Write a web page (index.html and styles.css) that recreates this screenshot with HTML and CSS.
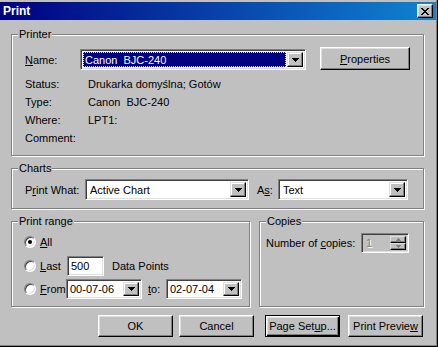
FILE: index.html
```html
<!DOCTYPE html>
<html lang="pl">
<head>
  <meta charset="UTF-8">
  <title>Print</title>
  <link rel="stylesheet" href="styles.css">
</head>
<body>
  <div class="window">
    <div class="titlebar">
      <span class="title">Print</span>
      <span class="close">
        <svg width="8" height="7" viewBox="0 0 8 7" shape-rendering="crispEdges"><path d="M0 0h2v1H0zM6 0h2v1H6zM1 1h2v1H1zM5 1h2v1H5zM2 2h4v1H2zM3 3h2v1H3zM2 4h4v1H2zM1 5h2v1H1zM5 5h2v1H5zM0 6h2v1H0zM6 6h2v1H6z"/></svg>
      </span>
    </div>

    <div class="content">
      <div class="group printer">
        <span class="group-title">Printer</span>
        <div class="name-row">
          <span class="name-label"><u>N</u>ame:</span>
          <div class="combo name-combo">
            <div class="combo-value selected"><span class="focus">Canon&nbsp; BJC-240</span></div>
            <span class="drop"><svg width="7" height="4" viewBox="0 0 7 4" shape-rendering="crispEdges"><path d="M0 0h7v1H0zM1 1h5v1H1zM2 2h3v1H2zM3 3h1v1H3z"/></svg></span>
          </div>
          <span class="btn props"><u>P</u>roperties</span>
        </div>
        <div class="info">
          <span>Status:</span><span>Drukarka domyślna; Gotów</span>
          <span>Type:</span><span>Canon&nbsp; BJC-240</span>
          <span>Where:</span><span>LPT1:</span>
          <span>Comment:</span><span></span>
        </div>
      </div>

      <div class="group charts">
        <span class="group-title">Charts</span>
        <div class="charts-row">
          <span class="what-label">P<u>r</u>int What:</span>
          <div class="combo what-combo">
            <div class="combo-value">Active Chart</div>
            <span class="drop"><svg width="7" height="4" viewBox="0 0 7 4" shape-rendering="crispEdges"><path d="M0 0h7v1H0zM1 1h5v1H1zM2 2h3v1H2zM3 3h1v1H3z"/></svg></span>
          </div>
          <span class="as-label">A<u>s</u>:</span>
          <div class="combo as-combo">
            <div class="combo-value">Text</div>
            <span class="drop"><svg width="7" height="4" viewBox="0 0 7 4" shape-rendering="crispEdges"><path d="M0 0h7v1H0zM1 1h5v1H1zM2 2h3v1H2zM3 3h1v1H3z"/></svg></span>
          </div>
        </div>
      </div>

      <div class="lower">
        <div class="group range">
          <span class="group-title">Print range</span>
          <div class="range-row all-row">
            <span class="radio checked"></span><span class="radio-label"><u>A</u>ll</span>
          </div>
          <div class="range-row last-row">
            <span class="radio"></span><span class="radio-label"><u>L</u>ast</span>
            <span class="edit last-edit">500</span>
            <span class="points">Data Points</span>
          </div>
          <div class="range-row from-row">
            <span class="radio"></span><span class="radio-label"><u>F</u>rom</span>
            <div class="combo date-combo">
              <div class="combo-value">00-07-06</div>
              <span class="drop"><svg width="7" height="4" viewBox="0 0 7 4" shape-rendering="crispEdges"><path d="M0 0h7v1H0zM1 1h5v1H1zM2 2h3v1H2zM3 3h1v1H3z"/></svg></span>
            </div>
            <span class="to-label"><u>t</u>o:</span>
            <div class="combo date-combo">
              <div class="combo-value">02-07-04</div>
              <span class="drop"><svg width="7" height="4" viewBox="0 0 7 4" shape-rendering="crispEdges"><path d="M0 0h7v1H0zM1 1h5v1H1zM2 2h3v1H2zM3 3h1v1H3z"/></svg></span>
            </div>
          </div>
        </div>

        <div class="group copies">
          <span class="group-title">Copies</span>
          <div class="copies-row">
            <span class="copies-label">Number of <u>c</u>opies:</span>
            <div class="spin">
              <span class="spin-value">1</span>
              <div class="spin-btns">
                <span class="spin-btn"><svg width="5" height="3" viewBox="0 0 5 3" shape-rendering="crispEdges"><path d="M2 0h1v1H2zM1 1h3v1H1zM0 2h5v1H0z"/></svg></span>
                <span class="spin-btn"><svg width="5" height="3" viewBox="0 0 5 3" shape-rendering="crispEdges"><path d="M0 0h5v1H0zM1 1h3v1H1zM2 2h1v1H2z"/></svg></span>
              </div>
            </div>
          </div>
        </div>
      </div>

      <div class="actions">
        <span class="btn action ok">OK</span>
        <span class="btn action cancel">Cancel</span>
        <span class="btn action default setup">Page Set<u>u</u>p...</span>
        <span class="btn action preview">Print Previe<u>w</u></span>
      </div>
    </div>
  </div>
</body>
</html>
```
FILE: styles.css
```css
body {
  margin: 0;
  font-family: "Liberation Sans", Arial, sans-serif;
  font-size: 11px;
  color: #000;
  background: #c0c0c0;
}

.window {
  box-sizing: border-box;
  width: 438px;
  height: 347px;
  background: #c0c0c0;
  border-right: 1px solid #000;
  border-bottom: 1px solid #000;
  box-shadow: inset -1px -1px 0 #808080;
  overflow: hidden;
}

.titlebar {
  display: flex;
  align-items: center;
  justify-content: space-between;
  height: 18px;
  margin: 2px 1px 0 0;
  padding: 0 3px 0 3px;
  background: linear-gradient(to right, #000080, #1084d0);
}

.title {
  color: #fff;
  font-weight: bold;
  font-size: 12px;
}

.close {
  box-sizing: border-box;
  display: flex;
  align-items: center;
  justify-content: center;
  width: 16px;
  height: 14px;
  background: #c0c0c0;
  border: 1px solid;
  border-color: #fff #000 #000 #fff;
  box-shadow: inset -1px -1px 0 #808080, inset 1px 1px 0 #dfdfdf;
  padding-right: 1px;
}

.content {
  padding: 14px 0 0 11px;
}

/* group boxes */
.group {
  box-sizing: border-box;
  position: relative;
  border: 1px solid #808080;
  box-shadow: inset 1px 1px 0 #fff, 1px 1px 0 #fff;
}

.group-title {
  position: absolute;
  top: -7px;
  left: 6px;
  padding: 0 1px;
  line-height: 13px;
  background: #c0c0c0;
}

.printer {
  width: 413px;
  height: 122px;
  padding: 12px 0 0 13px;
}

.name-row {
  display: flex;
  align-items: flex-end;
  height: 23px;
}

.name-label {
  width: 55px;
  align-self: center;
  padding-top: 2px;
}

.info {
  display: grid;
  grid-template-columns: 63px auto;
  grid-auto-rows: 18px;
  align-items: center;
  margin-top: 5px;
}

.charts {
  width: 413px;
  height: 41px;
  margin-top: 12px;
  padding: 10px 0 0 13px;
}

.charts-row {
  display: flex;
  align-items: center;
}

.what-label {
  width: 60px;
}

.as-label {
  width: 21px;
  margin-left: 8px;
}

.lower {
  display: flex;
  gap: 9px;
  margin-top: 12px;
}

.range {
  width: 239px;
  height: 86px;
  padding: 11px 0 0 12px;
}

.range-row {
  display: flex;
  align-items: center;
}

.all-row {
  height: 18px;
}

.last-row {
  height: 20px;
  margin-top: 5px;
}

.from-row {
  height: 20px;
  margin-top: 3px;
}

.radio-label {
  width: 27px;
  margin-left: 4px;
}

.from-row .radio-label {
  width: 26px;
}

.points {
  margin-left: 8px;
}

.to-label {
  width: 18px;
  margin-left: 6px;
}

.copies {
  width: 165px;
  height: 86px;
  padding: 11px 14px 0 6px;
}

.copies-row {
  display: flex;
  align-items: center;
}

.copies-label {
  flex: 1;
}

/* controls */
.btn {
  box-sizing: border-box;
  display: flex;
  align-items: center;
  justify-content: center;
  background: #c0c0c0;
  border: 1px solid;
  border-color: #fff #000 #000 #fff;
  box-shadow: inset -1px -1px 0 #808080, inset 1px 1px 0 #dfdfdf;
}

.props {
  width: 90px;
  height: 23px;
  margin-left: 14px;
}

.combo {
  box-sizing: border-box;
  display: flex;
  align-items: stretch;
  height: 21px;
  padding: 2px;
  background: #fff;
  border: 1px solid;
  border-color: #808080 #fff #fff #808080;
  box-shadow: inset 1px 1px 0 #404040, inset -1px -1px 0 #dfdfdf;
}

.combo-value {
  flex: 1;
  display: flex;
  align-items: center;
  padding-left: 2px;
  white-space: nowrap;
}

.combo-value.selected {
  padding: 0;
  margin-right: 1px;
  background: #000080;
  color: #fff;
}

.focus {
  box-sizing: border-box;
  display: flex;
  align-items: center;
  width: 100%;
  height: 100%;
  padding-left: 1px;
  border: 1px dotted #ffff00;
}

.drop {
  box-sizing: border-box;
  display: flex;
  align-items: center;
  justify-content: center;
  width: 16px;
  background: #c0c0c0;
  border: 1px solid;
  border-color: #dfdfdf #000 #000 #dfdfdf;
  box-shadow: inset -1px -1px 0 #808080, inset 1px 1px 0 #fff;
}

.name-combo {
  width: 226px;
}

.what-combo {
  width: 164px;
}

.as-combo {
  width: 130px;
}

.date-combo {
  width: 76px;
  height: 20px;
}

.date-combo .combo-value {
  padding-left: 1px;
}

.edit {
  box-sizing: border-box;
  display: flex;
  align-items: center;
  height: 20px;
  padding-left: 3px;
  background: #fff;
  border: 1px solid;
  border-color: #808080 #fff #fff #808080;
  box-shadow: inset 1px 1px 0 #404040, inset -1px -1px 0 #dfdfdf;
}

.last-edit {
  width: 37px;
}

.radio {
  box-sizing: border-box;
  position: relative;
  width: 12px;
  height: 12px;
  border-radius: 50%;
  background: #fff;
  border: 1px solid;
  border-color: #808080 #fff #fff #808080;
  box-shadow: inset 1px 1px 0 #404040, inset -1px -1px 0 #dfdfdf;
}

.radio.checked::after {
  content: "";
  position: absolute;
  top: 3px;
  left: 3px;
  width: 4px;
  height: 4px;
  border-radius: 50%;
  background: #000;
}

.spin {
  box-sizing: border-box;
  display: flex;
  width: 48px;
  height: 20px;
  padding: 2px;
  background: #c0c0c0;
  border: 1px solid;
  border-color: #808080 #fff #fff #808080;
  box-shadow: inset 1px 1px 0 #404040, inset -1px -1px 0 #dfdfdf;
}

.spin-value {
  flex: 1;
  display: flex;
  align-items: center;
  padding-left: 2px;
  color: #808080;
  text-shadow: 1px 1px 0 #fff;
}

.spin-btns {
  display: flex;
  flex-direction: column;
  width: 16px;
}

.spin-btn {
  box-sizing: border-box;
  flex: 1;
  display: flex;
  align-items: center;
  justify-content: center;
  background: #c0c0c0;
  border: 1px solid;
  border-color: #dfdfdf #000 #000 #dfdfdf;
  box-shadow: inset -1px -1px 0 #808080;
  fill: #808080;
}

.actions {
  display: flex;
  justify-content: flex-end;
  padding-right: 14px;
  margin-top: 8px;
}

.action {
  width: 75px;
  height: 22px;
}

.cancel {
  margin-left: 6px;
}

.setup {
  margin-left: 11px;
}

.preview {
  margin-left: 8px;
}

.btn.default {
  border: 1px solid #000;
  box-shadow: inset 1px 1px 0 #fff, inset -1px -1px 0 #000, inset -2px -2px 0 #808080, inset 2px 2px 0 #dfdfdf;
}
```
